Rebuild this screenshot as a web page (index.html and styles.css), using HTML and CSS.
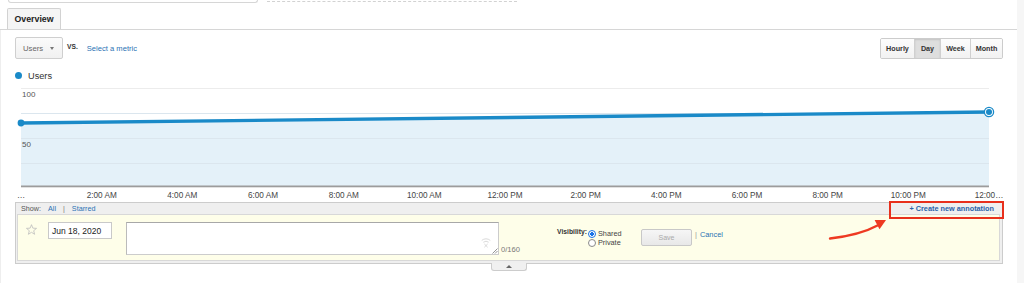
FILE: index.html
```html
<!DOCTYPE html>
<html>
<head>
<meta charset="utf-8">
<title>Overview</title>
<link rel="stylesheet" href="styles.css">
</head>
<body>
<div class="page">
  <div class="main">
    <div class="topbar">
      <div class="top-box"></div>
      <div class="top-dash"></div>
    </div>
    <div class="tabs">
      <div class="tab">Overview</div>
    </div>
    <div class="content">
      <div class="controls">
        <div class="metric">
          <div class="select"><span>Users</span><span class="caret"></span></div>
          <span class="vs">vs.</span>
          <a class="link metric-link">Select a metric</a>
        </div>
        <div class="seg">
          <span class="w-hourly">Hourly</span>
          <span class="w-day on">Day</span>
          <span class="w-week">Week</span>
          <span class="w-month">Month</span>
        </div>
      </div>
      <div class="legend"><span class="dot"></span><span>Users</span></div>
      <svg class="chart" width="1002" height="118" viewBox="0 0 1002 118">
        <g stroke="#ececec" stroke-width="1">
          <line x1="6" y1="4.5" x2="974" y2="4.5"/>
        </g>
        <polygon points="6,39 974,28 974,102 6,102" fill="#e4f1f9"/>
        <g stroke="#dbe6ee" stroke-width="1">
          <line x1="6" y1="29.5" x2="974" y2="29.5"/>
          <line x1="6" y1="54.5" x2="974" y2="54.5"/>
          <line x1="6" y1="79.5" x2="974" y2="79.5"/>
        </g>
        <rect x="6" y="101.5" width="968" height="1.8" fill="#9c9c9c"/>
        <line x1="6" y1="39" x2="974" y2="28" stroke="#1a8ac8" stroke-width="3.4"/>
        <circle cx="6" cy="39" r="3.4" fill="#1a8ac8"/>
        <circle cx="974" cy="28" r="4.6" fill="#fff" stroke="#1a8ac8" stroke-width="1.3"/>
        <circle cx="974" cy="28" r="3" fill="#1a8ac8"/>
        <g class="ylab">
          <text x="7" y="13">100</text>
          <text x="7" y="63">50</text>
        </g>
        <g class="xlab" text-anchor="middle">
          <text x="6" y="114">…</text>
          <text x="86.7" y="114">2:00 AM</text>
          <text x="167.3" y="114">4:00 AM</text>
          <text x="248" y="114">6:00 AM</text>
          <text x="328.7" y="114">8:00 AM</text>
          <text x="409.3" y="114">10:00 AM</text>
          <text x="490" y="114">12:00 PM</text>
          <text x="570.7" y="114">2:00 PM</text>
          <text x="651.3" y="114">4:00 PM</text>
          <text x="732" y="114">6:00 PM</text>
          <text x="812.7" y="114">8:00 PM</text>
          <text x="893.3" y="114">10:00 PM</text>
          <text x="974" y="114">12:00…</text>
        </g>
      </svg>
      <div class="annot">
        <div class="annot-head">
          <div class="show">
            <span class="show-label">Show:</span>
            <a class="link">All</a>
            <span class="bar">|</span>
            <a class="link">Starred</a>
          </div>
          <a class="create">+ Create new annotation</a>
        </div>
        <div class="annot-body">
          <svg class="star" width="11" height="11" viewBox="0 0 11 11">
            <polygon points="5.5,0.7 6.85,4.14 10.54,4.36 7.69,6.71 8.62,10.29 5.5,8.3 2.38,10.29 3.31,6.71 0.46,4.36 4.15,4.14" fill="none" stroke="#bdbdbd" stroke-width="0.8" stroke-linejoin="round"/>
          </svg>
          <div class="date">Jun 18, 2020</div>
          <div class="ta-wrap">
            <textarea class="ta"></textarea>
            <svg class="ta-icon" width="10" height="11" viewBox="0 0 10 11">
              <g fill="none" stroke="#cfcfcf" stroke-width="0.8" stroke-linecap="round">
                <path d="M1 3.2 A6 6 0 0 1 9 3.2"/>
                <path d="M2.6 5 A4 4 0 0 1 7.4 5"/>
                <path d="M3.6 7.2 L6.4 10 M6.4 7.2 L3.6 10"/>
              </g>
            </svg>
            <svg class="grip" width="6" height="6" viewBox="0 0 6 6">
              <g stroke="#777" stroke-width="0.8">
                <path d="M5.5 0.5 L0.5 5.5 M5.5 3 L3 5.5"/>
              </g>
            </svg>
          </div>
          <div class="counter">0/160</div>
          <div class="vis-label">Visibility:</div>
          <div class="radios">
            <div class="radio-row"><span class="radio checked"></span><span>Shared</span></div>
            <div class="radio-row"><span class="radio"></span><span>Private</span></div>
          </div>
          <div class="save">Save</div>
          <span class="sep">|</span>
          <a class="link cancel">Cancel</a>
        </div>
      </div>
      <div class="collapse"><span class="up"></span></div>
      <svg class="arrow" width="70" height="30" viewBox="0 0 70 30">
        <path d="M10 24.5 Q40 21 58 11.2" fill="none" stroke="#ee3a22" stroke-width="2.4" stroke-linecap="round"/>
        <polygon points="66,6 59.5,15.3 54.6,6.1" fill="#ee3a22"/>
      </svg>
    </div>
  </div>
  <div class="strip"></div>
</div>
</body>
</html>
```

FILE: styles.css
```css
* { box-sizing: border-box; margin: 0; padding: 0; }
html, body { height: 100%; }
body {
  font-family: "Liberation Sans", Arial, sans-serif;
  background: #fff;
  color: #333;
  overflow: hidden;
}
.page { display: flex; height: 283px; }
.main { width: 1017px; flex: none; display: flex; flex-direction: column; }
.strip { flex: 1; background: #f6f6f6; }

.topbar { height: 8px; display: flex; align-items: flex-start; flex: none; }
.top-box {
  margin-left: 8px; width: 250px; height: 3px;
  border: 1px solid #d6d6d6; border-top: none;
  border-radius: 0 0 3px 3px;
}
.top-dash { margin-left: 9px; width: 250px; margin-top: 1px; border-top: 1px dashed #d2d2d2; }

.tabs {
  height: 22px; flex: none;
  border-bottom: 1px solid #d6d6d6;
  display: flex; align-items: flex-end;
  padding-left: 7px;
}
.tab {
  height: 21px; width: 54px;
  border: 1px solid #d2d2d2; border-bottom: none;
  border-radius: 2px 2px 0 0;
  background: #f5f5f5;
  font-weight: bold; font-size: 8.8px; color: #222;
  display: flex; align-items: center; justify-content: center;
}

.content {
  flex: 1;
  position: relative;
  border-left: 1px solid #eeeeee;
  padding: 0 14px 0 14px;
}

.controls {
  margin-top: 7px; height: 22px;
  display: flex; align-items: center; justify-content: space-between;
}
.metric { display: flex; align-items: center; height: 22px; }
.select {
  width: 48px; height: 22px;
  border: 1px solid #cfcfcf; border-radius: 2px;
  background: linear-gradient(#fbfbfb, #f1f1f1);
  display: flex; align-items: center;
  padding-left: 7px;
  font-size: 7.7px; color: #666;
}
.caret {
  margin-left: 7px; width: 0; height: 0;
  border-left: 2.5px solid transparent;
  border-right: 2.5px solid transparent;
  border-top: 3px solid #777;
}
.vs {
  margin-left: 4px; margin-bottom: 3px;
  font-size: 6.7px; font-weight: bold; color: #333;
  text-transform: uppercase;
}
.link { color: #2a72b4; text-decoration: none; }
.metric-link { margin-left: 9px; font-size: 7.6px; }

.seg {
  display: flex; height: 21px;
  border: 1px solid #cccccc; border-radius: 2px;
  overflow: hidden;
}
.seg span {
  display: flex; align-items: center; justify-content: center;
  font-weight: bold; font-size: 7.2px; color: #333;
  background: linear-gradient(#fcfcfc, #f2f2f2);
  border-left: 1px solid #d0d0d0;
}
.seg span:first-child { border-left: none; }
.seg .on { background: #dedede; box-shadow: inset 0 1px 2px rgba(0,0,0,0.12); }
.w-hourly { width: 33px; }
.w-day { width: 26px; }
.w-week { width: 30px; }
.w-month { width: 32px; }

.legend {
  margin-top: 8px; height: 17px;
  display: flex; align-items: center; gap: 6px;
  font-size: 9.2px; color: #333;
}
.dot { width: 7px; height: 7px; border-radius: 50%; background: #1a8ac8; }

.chart { display: block; overflow: visible; }
.ylab text { font-family: "Liberation Sans", Arial, sans-serif; font-size: 8px; fill: #555; }
.xlab text { font-family: "Liberation Sans", Arial, sans-serif; font-size: 8.2px; fill: #444; }

.annot {
  border: 1px solid #cccccc;
  background: #efefef;
  padding: 0 2px 2px 1px;
}
.annot-head {
  height: 11px;
  display: flex; align-items: center; justify-content: space-between;
  padding: 0 6px 0 4px;
  font-size: 7.2px;
}
.show { display: flex; align-items: center; }
.show-label { color: #555; margin-right: 7px; }
.bar { color: #777; margin: 0 7px; }
.create {
  position: relative;
  display: block; height: 11px; line-height: 11px;
  font-weight: bold; font-size: 7.3px; color: #2a62a8;
}
.create::after {
  content: "";
  position: absolute;
  left: -20px; right: -10px; top: -2px; bottom: -5px;
  border: 2px solid #e8301c;
}

.annot-body {
  height: 47px;
  border: 1px solid #d8d8d8;
  background: #fefee9;
  display: flex; align-items: flex-start;
  padding-left: 8px;
}
.star { flex: none; margin-top: 9px; }
.date {
  flex: none;
  margin-left: 11px; margin-top: 7px;
  width: 64px; height: 17px;
  border: 1px solid #c9c9c9; background: #fff;
  padding-left: 3px;
  display: flex; align-items: center;
  font-size: 8.5px; color: #222;
}
.ta-wrap {
  flex: none; position: relative;
  margin-left: 14px; margin-top: 7px;
  width: 373px; height: 33px;
}
.ta {
  display: block; width: 100%; height: 100%;
  border: 1px solid #cccccc; border-top-color: #a8a8a8; border-left-color: #bbbbbb;
  background: #fff; resize: none; outline: none;
}
.ta-icon { position: absolute; right: 8px; bottom: 7px; }
.grip { position: absolute; right: 1px; bottom: 1px; }
.counter {
  flex: none; width: 20px;
  margin-left: 2px; margin-top: 30px;
  line-height: 10px; font-size: 7.6px; color: #777;
}
.vis-label {
  flex: none; width: 31px;
  margin-left: 36px; margin-top: 12px;
  line-height: 10px; font-size: 6.75px; font-weight: bold; color: #333;
}
.radios { flex: none; width: 34px; margin-top: 14px; }
.radio-row {
  height: 9px; display: flex; align-items: center; gap: 2px;
  font-size: 7.3px; color: #444;
}
.radio {
  flex: none; width: 8px; height: 8px; border-radius: 50%;
  border: 1px solid #8a8a8a; background: #fff;
}
.radio.checked {
  border: 1.5px solid #1a73e8;
  background: radial-gradient(circle, #1a73e8 0 1.6px, #fff 2px);
}
.save {
  flex: none;
  margin-left: 19px; margin-top: 14px;
  width: 51px; height: 17px;
  border: 1px solid #c8c8c8; border-radius: 2px;
  background: linear-gradient(#f6f6f6, #e8e8e8);
  display: flex; align-items: center; justify-content: center;
  font-size: 7px; color: #aaa;
}
.sep { margin-left: 3px; margin-top: 15px; line-height: 10px; font-size: 7.4px; color: #999; }
.cancel { margin-left: 3px; margin-top: 15px; line-height: 10px; font-size: 7.4px; }

.collapse {
  width: 36px; height: 8px;
  margin: -1px auto 0;
  border: 1px solid #cccccc; border-top: none;
  border-radius: 0 0 3px 3px;
  background: #f0f0f0;
  display: flex; align-items: center; justify-content: center;
}
.up {
  width: 0; height: 0;
  border-left: 3px solid transparent;
  border-right: 3px solid transparent;
  border-bottom: 3px solid #666;
}

.arrow { position: absolute; left: 819px; top: 184px; }
```
